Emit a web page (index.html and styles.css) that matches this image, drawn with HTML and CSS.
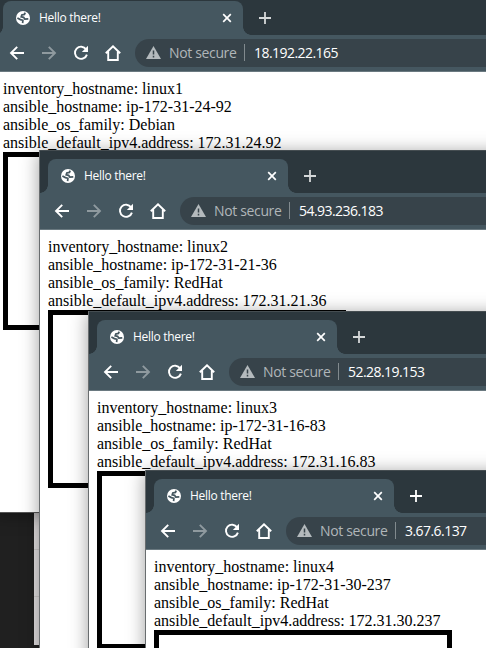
FILE: index.html
```
<!DOCTYPE html>
<html lang="en">
<head>
<meta charset="utf-8">
<title>Hello there!</title>
<link rel="stylesheet" href="styles.css">
</head>
<body>
<svg class="defs" width="0" height="0">
  <symbol id="globe" viewBox="0 0 14 14"><circle cx="7" cy="7" r="7" fill="#fff"/><path d="M9.2 1.6 8.4 3.4 5.8 3.9 5.2 5.9 7.6 6.3 8.8 8 12.3 7.8M1.4 6.9 4.4 8.6 6.9 9.3 6.6 12.2" fill="none" stroke="#455760" stroke-width="1.7"/></symbol>
  <symbol id="close" viewBox="0 0 10 10"><path d="M1.2 1.2 8.8 8.8M8.8 1.2 1.2 8.8" stroke="#fff" stroke-width="1.7"/></symbol>
  <symbol id="plus" viewBox="0 0 12 12"><path d="M6 0V12M0 6H12" stroke="currentColor" stroke-width="1.8"/></symbol>
  <symbol id="arrow" viewBox="0 0 16 16"><path d="M15 8H2.2M8.2 1.8 2 8l6.2 6.2" fill="none" stroke="currentColor" stroke-width="1.9"/></symbol>
  <symbol id="reload" viewBox="0 0 16 16"><path d="M13.1 4.3A6.1 6.1 0 1 0 13.9 9.6" fill="none" stroke="#fff" stroke-width="1.9"/><path d="M15 .8V7H8.8Z" fill="#fff"/></symbol>
  <symbol id="home" viewBox="0 0 16 16"><path d="M.8 8.3 8 1.3l7.2 7M3.2 6.8V15h9.6V6.8" fill="none" stroke="#fff" stroke-width="1.9"/></symbol>
  <symbol id="warn" viewBox="0 0 15 13"><path d="M7.5 0 15 13H0Z" fill="#b4babd"/><path d="M7.5 4.5V8.6M7.5 9.8v1.6" stroke="#37434a" stroke-width="1.5"/></symbol>
</svg>
<main class="desktop">
  <div class="sheet"></div>
  <section class="window w1">
    <header class="tabs"><div class="tab"><svg class="globe"><use href="#globe"/></svg><span class="title">Hello there!</span><svg class="close"><use href="#close"/></svg></div><svg class="plus"><use href="#plus"/></svg></header>
    <nav class="toolbar"><svg class="icon"><use href="#arrow"/></svg><svg class="icon forward"><use href="#arrow"/></svg><svg class="icon"><use href="#reload"/></svg><svg class="icon"><use href="#home"/></svg><div class="address"><svg class="warn"><use href="#warn"/></svg><span class="insecure">Not secure</span><span class="ip">18.192.22.165</span></div></nav>
    <article class="page"><p>inventory_hostname: linux1</p><p>ansible_hostname: ip-172-31-24-92</p><p>ansible_os_family: Debian</p><p>ansible_default_ipv4.address: 172.31.24.92</p><div class="box"></div></article>
  </section>
  <section class="window w2">
    <header class="tabs"><div class="tab"><svg class="globe"><use href="#globe"/></svg><span class="title">Hello there!</span><svg class="close"><use href="#close"/></svg></div><svg class="plus"><use href="#plus"/></svg></header>
    <nav class="toolbar"><svg class="icon"><use href="#arrow"/></svg><svg class="icon forward"><use href="#arrow"/></svg><svg class="icon"><use href="#reload"/></svg><svg class="icon"><use href="#home"/></svg><div class="address"><svg class="warn"><use href="#warn"/></svg><span class="insecure">Not secure</span><span class="ip">54.93.236.183</span></div></nav>
    <article class="page"><p>inventory_hostname: linux2</p><p>ansible_hostname: ip-172-31-21-36</p><p>ansible_os_family: RedHat</p><p>ansible_default_ipv4.address: 172.31.21.36</p><div class="box"></div></article>
  </section>
  <section class="window w3">
    <header class="tabs"><div class="tab"><svg class="globe"><use href="#globe"/></svg><span class="title">Hello there!</span><svg class="close"><use href="#close"/></svg></div><svg class="plus"><use href="#plus"/></svg></header>
    <nav class="toolbar"><svg class="icon"><use href="#arrow"/></svg><svg class="icon forward"><use href="#arrow"/></svg><svg class="icon"><use href="#reload"/></svg><svg class="icon"><use href="#home"/></svg><div class="address"><svg class="warn"><use href="#warn"/></svg><span class="insecure">Not secure</span><span class="ip">52.28.19.153</span></div></nav>
    <article class="page"><p>inventory_hostname: linux3</p><p>ansible_hostname: ip-172-31-16-83</p><p>ansible_os_family: RedHat</p><p>ansible_default_ipv4.address: 172.31.16.83</p><div class="box"></div></article>
  </section>
  <section class="window w4">
    <header class="tabs"><div class="tab"><svg class="globe"><use href="#globe"/></svg><span class="title">Hello there!</span><svg class="close"><use href="#close"/></svg></div><svg class="plus"><use href="#plus"/></svg></header>
    <nav class="toolbar"><svg class="icon"><use href="#arrow"/></svg><svg class="icon forward"><use href="#arrow"/></svg><svg class="icon"><use href="#reload"/></svg><svg class="icon"><use href="#home"/></svg><div class="address"><svg class="warn"><use href="#warn"/></svg><span class="insecure">Not secure</span><span class="ip">3.67.6.137</span></div></nav>
    <article class="page"><p>inventory_hostname: linux4</p><p>ansible_hostname: ip-172-31-30-237</p><p>ansible_os_family: RedHat</p><p>ansible_default_ipv4.address: 172.31.30.237</p><div class="box"></div></article>
  </section>
</main>
</body>
</html>
```
FILE: styles.css
```
* { box-sizing: border-box; }
body { margin: 0; }
p { margin: 0; }
svg { display: block; flex: none; }
.defs { position: absolute; }

.desktop {
  position: relative;
  width: 486px;
  height: 648px;
  overflow: hidden;
  background: #202020;
}
.sheet {
  position: absolute;
  left: 34px;
  top: 512px;
  width: 6px;
  height: 133px;
  background: linear-gradient(#c9c6c6 0 1px, transparent 1px 37px, #cfcccc 37px 38px, transparent 38px 84px, #cfcccc 84px 85px, transparent 85px) #e3e0e1;
}

/* Browser windows, each stacked over the one before */
.window {
  position: absolute;
  width: 560px;
  height: 640px;
  background: #fff;
  border-left: 1px solid #696d6f;
  box-shadow: 0 2px 17px rgba(0, 0, 0, .38);
}
.w1 { left: -6px; top: -8px; height: 521px; border-bottom: 1px solid #555; }
.w2 { left: 39px; top: 150px; }
.w3 { left: 88px; top: 311px; }
.w4 { left: 145px; top: 470px; }

.tabs {
  display: flex;
  height: 43px;
  padding: 9px 0 0 8px;
  background: #2c373d;
  box-shadow: inset 0 1px #454d51;
}
.tab {
  position: relative;
  display: flex;
  align-items: center;
  width: 240px;
  height: 34px;
  padding: 0 11px 0 13px;
  border-radius: 8px 8px 0 0;
  background: #455760;
}
.tab::before, .tab::after {
  content: "";
  position: absolute;
  bottom: 0;
  width: 8px;
  height: 8px;
}
.tab::before { left: -8px; background: radial-gradient(circle at 0 0, transparent 7.5px, #455760 8px); }
.tab::after { right: -8px; background: radial-gradient(circle at 100% 0, transparent 7.5px, #455760 8px); }
.globe { width: 14px; height: 14px; }
.title {
  margin-left: 9px;
  font: 12px/16px "Open Sans", "Noto Sans", sans-serif;
  letter-spacing: -.3px;
  color: #fff;
  white-space: nowrap;
}
.close { width: 10px; height: 10px; margin-left: auto; }
.plus { width: 12px; height: 12px; margin: 11px 0 0 16px; color: #d5d8d9; }
.w4 .plus { color: #fff; }

.toolbar {
  display: flex;
  align-items: center;
  gap: 16px;
  height: 37px;
  padding: 0 0 1px 14px;
  background: #455760;
  border-bottom: 1px solid #6a7980;
  color: #fff;
}
.icon { width: 16px; height: 16px; }
.forward { color: #8f9a9f; transform: scaleX(-1); }
.address {
  display: flex;
  align-items: center;
  flex: 1;
  height: 28px;
  margin-left: -2px;
  padding-left: 11px;
  border-radius: 14px 0 0 14px;
  background: #37434a;
  font: 14px/20px "Open Sans", "Noto Sans", sans-serif;
  white-space: nowrap;
}
.warn { width: 15px; height: 13px; }
.insecure {
  width: 76px;
  height: 17px;
  line-height: 18px;
  margin-left: 8px;
  border-right: 1px solid #818a8e;
  letter-spacing: -.35px;
  color: #b0b6b9;
}
.ip { margin-left: 9px; letter-spacing: -.55px; color: #fff; }

.page {
  padding: 8px;
  font: 16px/18px "Liberation Serif", serif;
  color: #000;
}
.box { width: 298px; height: 178px; border: 5px solid #000; }
```
